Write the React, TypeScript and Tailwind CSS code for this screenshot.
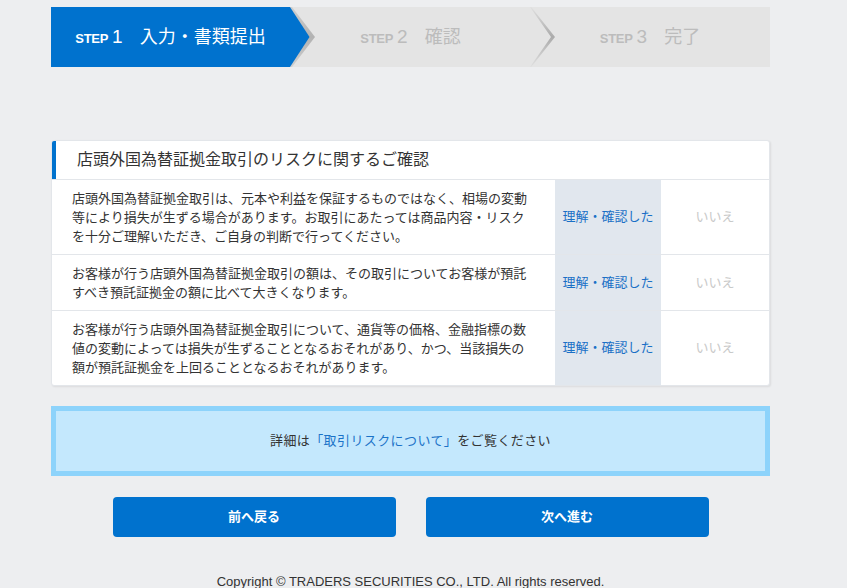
import React from "react";

const font = { fontFamily: '"Liberation Sans", "Noto Sans CJK JP", sans-serif' };

const rows = [
  "店頭外国為替証拠金取引は、元本や利益を保証するものではなく、相場の変動等により損失が生ずる場合があります。お取引にあたっては商品内容・リスクを十分ご理解いただき、ご自身の判断で行ってください。",
  "お客様が行う店頭外国為替証拠金取引の額は、その取引についてお客様が預託すべき預託証拠金の額に比べて大きくなります。",
  "お客様が行う店頭外国為替証拠金取引について、通貨等の価格、金融指標の数値の変動によっては損失が生ずることとなるおそれがあり、かつ、当該損失の額が預託証拠金を上回ることとなるおそれがあります。",
];

function StepLabel({ n, label, active }: { n: number; label: string; active: boolean }) {
  return (
    <div className={`flex items-baseline ${active ? "text-white" : "text-[#bcbcbc]"}`}>
      <span className="text-[13px] font-bold tracking-[-0.3px]">STEP</span>
      <span className="ml-[4px] text-[19px]">{n}</span>
      <span className="ml-[17px] text-[18px]">{label}</span>
    </div>
  );
}

export default function App() {
  return (
    <div className="min-h-screen bg-[#edeef0] text-[#333]" style={font}>
      <div className="ml-[51px] w-[719px] pt-[7px]">
        {/* steps */}
        <div className="relative flex h-[60px] bg-[#e4e4e4]">
          <div className="relative flex w-[239px] items-center justify-center bg-[#0072ce] pt-[1px]">
            <StepLabel n={1} label="入力・書類提出" active />
            <svg className="absolute left-full top-0 z-10 h-[60px] w-[26px]" viewBox="0 0 26 60">
              <defs>
                <linearGradient id="g1" x1="0" y1="0" x2="0" y2="1">
                  <stop offset="0" stopColor="#cfcfcf" />
                  <stop offset="0.5" stopColor="#b2b2b2" />
                  <stop offset="1" stopColor="#cfcfcf" />
                </linearGradient>
              </defs>
              <polygon points="0,0 2,0 25,30 2,60 0,60" fill="url(#g1)" />
              <polygon points="0,0 19.5,30 0,60" fill="#0072ce" />
            </svg>
          </div>
          <div className="relative flex w-[240px] items-center justify-center pt-[1px]">
            <div className="ml-[1px]">
              <StepLabel n={2} label="確認" active={false} />
            </div>
            <svg className="absolute left-full top-0 z-10 h-[60px] w-[26px]" viewBox="0 0 26 60">
              <defs>
                <linearGradient id="g2" x1="0" y1="0" x2="0" y2="1">
                  <stop offset="0" stopColor="#e0e0e0" />
                  <stop offset="0.5" stopColor="#ababab" />
                  <stop offset="1" stopColor="#e0e0e0" />
                </linearGradient>
              </defs>
              <polygon points="0,0 1.2,0 25,30 1.2,60 0,60 21,30" fill="url(#g2)" />
            </svg>
          </div>
          <div className="flex flex-1 items-center justify-center pt-[1px]">
            <StepLabel n={3} label="完了" active={false} />
          </div>
        </div>

        {/* card */}
        <div className="mt-[73px] overflow-hidden rounded-[3px] border border-[#e3e6ea] bg-white shadow-[1px_1px_2px_rgba(0,0,0,0.08)]">
          <div className="flex h-[39px] border-b border-[#e3e6ea]">
            <div className="w-[4px] bg-[#0072ce]" />
            <div className="flex items-center pl-[21px] text-[16px] text-[#333]">
              店頭外国為替証拠金取引のリスクに関するご確認
            </div>
          </div>
          {rows.map((t, i) => (
            <div
              key={i}
              className={`grid grid-cols-[503px_106px_1fr] ${i < rows.length - 1 ? "border-b border-[#e3e6ea]" : ""}`}
            >
              <div className="py-[8.5px] pl-[20px] pr-[21px] text-[13px] leading-[19px] text-[#333]">{t}</div>
              <div className="flex items-center justify-center bg-[#e1e7ee] text-[13px] text-[#1a70c6]">
                理解・確認した
              </div>
              <div className="flex items-center justify-center text-[13px] text-[#c9c9c9]">いいえ</div>
            </div>
          ))}
        </div>

        {/* info */}
        <div className="mt-[20px] flex h-[70px] items-center justify-center border-[5px] border-[#8dd3fb] bg-[#c4e8fd] text-[13px] tracking-[0.4px] text-[#333]">
          <span>
            詳細は<span className="text-[#1b73c8]">「取引リスクについて」</span>をご覧ください
          </span>
        </div>

        {/* buttons */}
        <div className="mt-[21px] flex justify-center gap-[30px]">
          <button className="h-[40px] w-[283px] rounded-[4px] bg-[#0072ce] text-[13px] font-bold text-white">
            前へ戻る
          </button>
          <button className="h-[40px] w-[283px] rounded-[4px] bg-[#0072ce] text-[13px] font-bold text-white">
            次へ進む
          </button>
        </div>

        <div className="mt-[35px] text-center text-[13px] text-[#333]">
          Copyright © TRADERS SECURITIES CO., LTD. All rights reserved.
        </div>
      </div>
    </div>
  );
}
